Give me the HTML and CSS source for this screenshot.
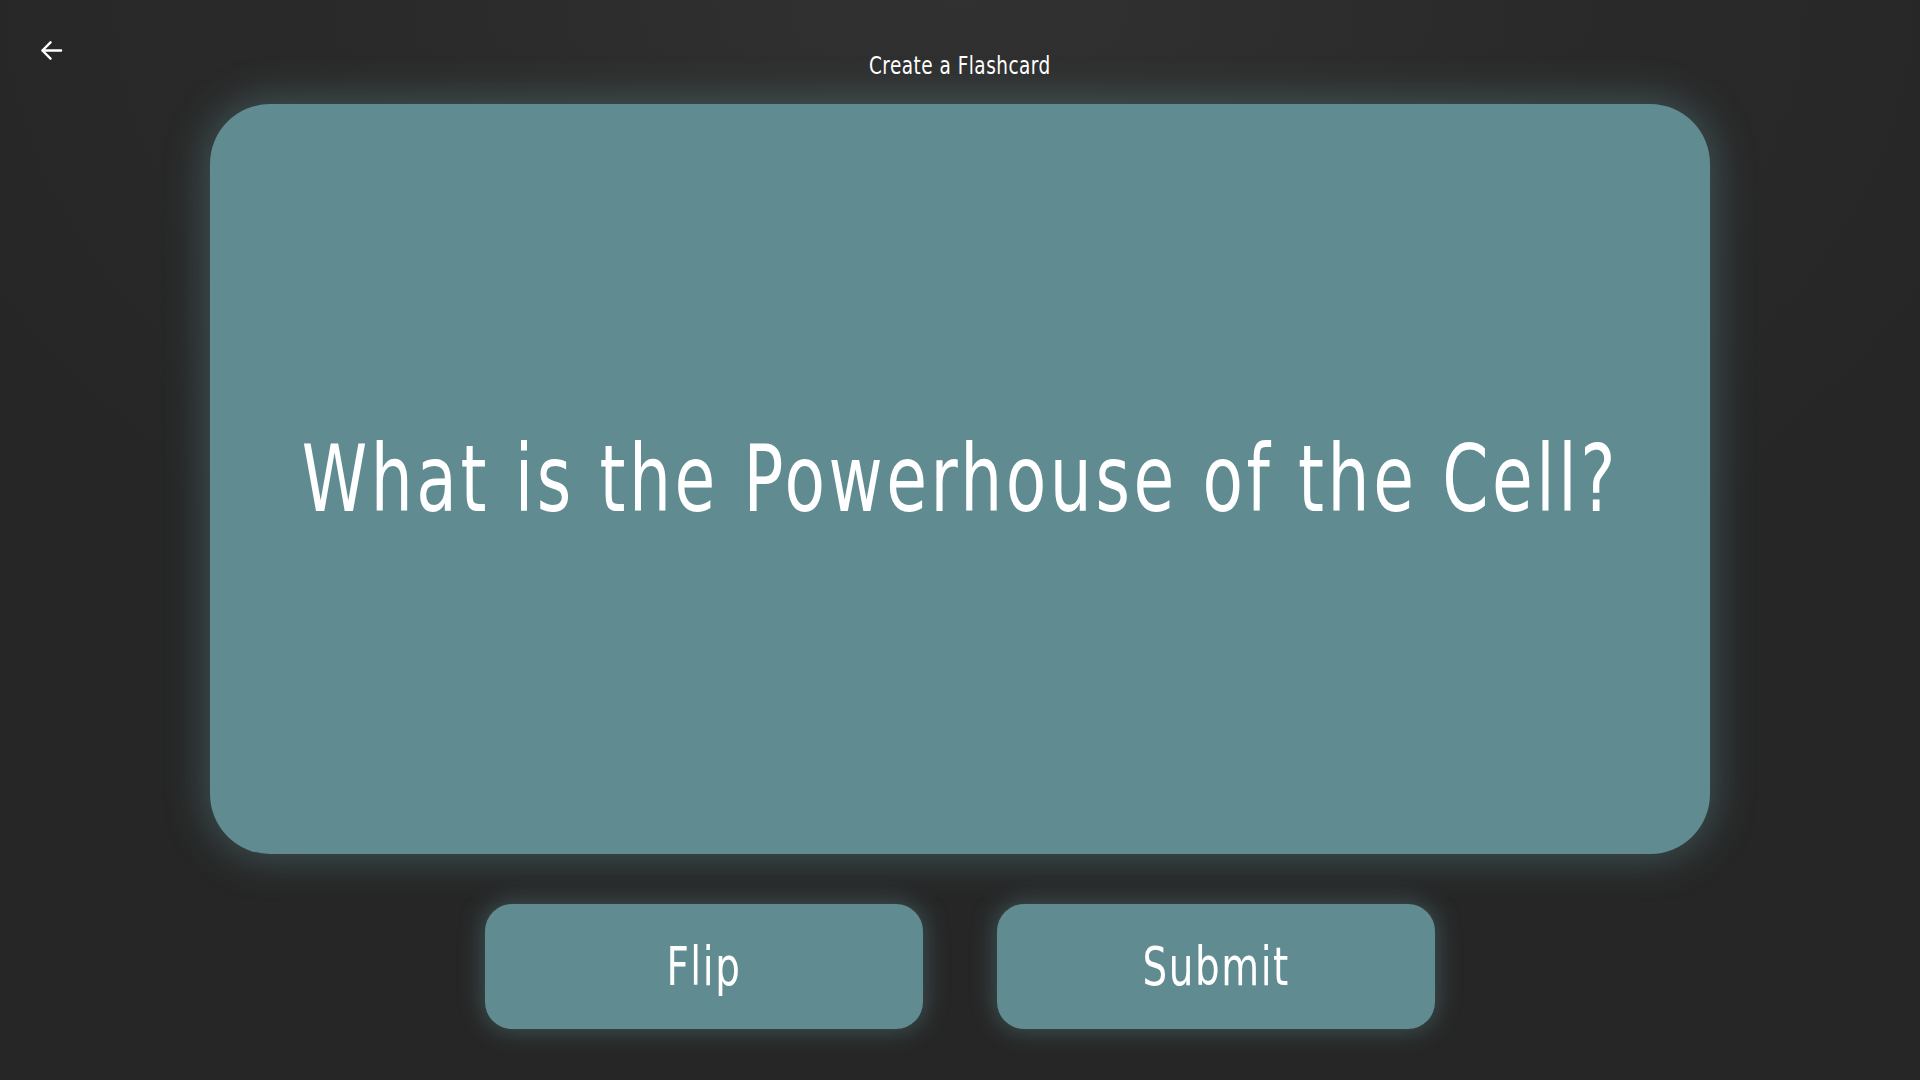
FILE: index.html
```html
<!DOCTYPE html>
<html lang="en">
<head>
<meta charset="utf-8">
<title>Create a Flashcard</title>
<link rel="stylesheet" href="styles.css">
</head>
<body>
<div class="page">
  <header class="topbar">
    <button class="back" aria-label="Back">
      <svg width="24" height="24" viewBox="0 0 24 24" fill="none" stroke="#ffffff" stroke-width="2.5" stroke-linecap="round" stroke-linejoin="round"><path d="M22 12H2.5M11 3.5L2.5 12l8.5 8.5"/></svg>
    </button>
    <h1 class="title"><span class="narrow">Create a Flashcard</span></h1>
  </header>
  <main class="card">
    <p class="question"><span class="narrow">What is the Powerhouse of the Cell?</span></p>
  </main>
  <div class="actions">
    <button class="btn"><span class="narrow">Flip</span></button>
    <button class="btn"><span class="narrow">Submit</span></button>
  </div>
</div>
</body>
</html>
```
FILE: styles.css
```css
* { box-sizing: border-box; }
html, body { margin: 0; padding: 0; height: 100%; }
body {
  background: radial-gradient(ellipse 1100px 700px at 50% 0%, #313131 0%, #2a2a2a 55%, #262626 100%);
  background-color: #272727;
  color: #ffffff;
  font-family: "DejaVu Sans Condensed", "DejaVu Sans", sans-serif;
}
.page {
  width: 1920px;
  height: 1080px;
  display: flex;
  flex-direction: column;
  align-items: center;
}
.narrow {
  display: inline-block;
  white-space: nowrap;
  transform: scaleX(0.8);
  transform-origin: 50% 50%;
}
.topbar {
  position: relative;
  width: 100%;
  height: 104px;
  display: flex;
  justify-content: center;
  align-items: flex-start;
}
.back {
  position: absolute;
  left: 38px;
  top: 38px;
  width: 26px;
  height: 24px;
  padding: 0;
  border: 0;
  background: transparent;
  display: flex;
  align-items: center;
  justify-content: center;
}
.back svg { width: 23px; height: 23px; }
.title {
  margin: 51px 0 0 0;
  font-size: 25px;
  font-weight: 400;
  line-height: 30px;
  letter-spacing: 0.6px;
}
.title .narrow { transform: scaleX(0.82); }
.card {
  width: 1500px;
  height: 750px;
  background: #5f8b91;
  border-radius: 60px;
  box-shadow: 0 0 40px 4px rgba(95, 139, 145, 0.45);
  display: flex;
  align-items: center;
  justify-content: center;
}
.question {
  flex-shrink: 0;
  margin: 0;
  font-size: 92px;
  line-height: 1;
  letter-spacing: 4.5px;
  font-weight: 400;
  padding-top: 2px;
}
.actions {
  margin-top: 50px;
  display: flex;
  gap: 74px;
}
.btn {
  width: 438px;
  height: 125px;
  border: 0;
  border-radius: 27px;
  background: #5f8b91;
  color: #ffffff;
  font-family: inherit;
  font-size: 54px;
  letter-spacing: 2px;
  box-shadow: 0 0 24px 2px rgba(95, 139, 145, 0.45);
  padding: 0;
}
```
